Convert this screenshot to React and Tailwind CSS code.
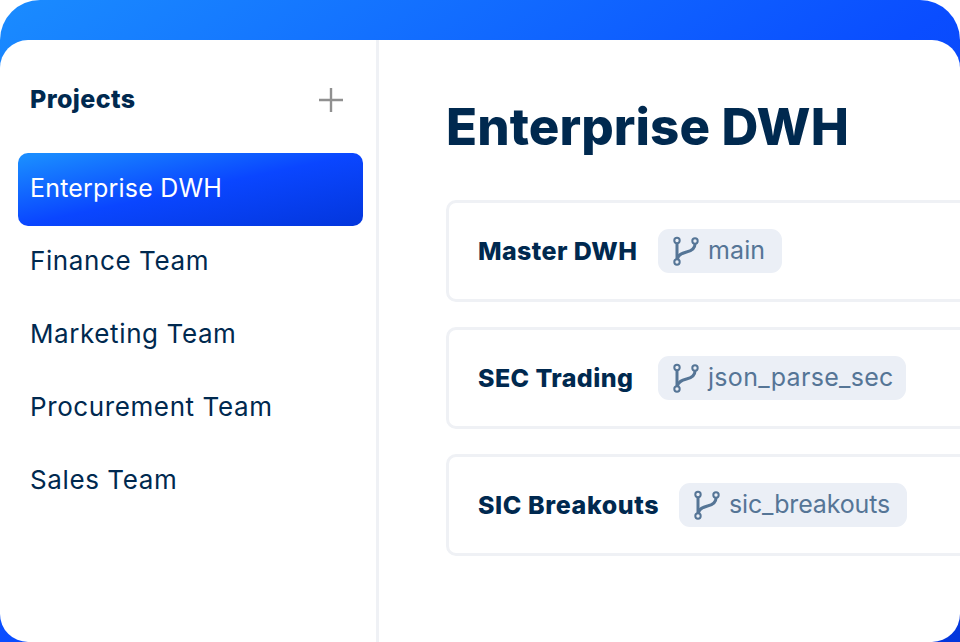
import React from "react";

function Branch() {
  return (
    <svg width="26" height="30" viewBox="0 0 26 30" fill="none" stroke="#557596" className="shrink-0">
      <circle cx="4" cy="4.5" r="2.7" strokeWidth="2" />
      <circle cx="22" cy="5" r="2.7" strokeWidth="2" />
      <circle cx="4" cy="26" r="2.7" strokeWidth="2" />
      <path d="M4 7.5V23" strokeWidth="3" />
      <path d="M22 8C22 13 18 15 13.500 16C9 17.200 5 18.500 4.500 23" strokeWidth="3" />
    </svg>
  );
}

function Row({ title, branch, titleClass, pillClass, branchClass }) {
  return (
    <div className="h-[102px] w-[560px] shrink-0 rounded-[10px] border-[3px] border-[#eff1f5] flex items-center pl-[29px]">
      <span className={`pt-[1px] text-[25px] font-extrabold text-[#00294f] whitespace-nowrap shrink-0 ${titleClass}`}>{title}</span>
      <span className={`h-[44px] rounded-[11px] bg-[#ebeff6] flex items-center pl-[15px] gap-[9px] shrink-0 ${pillClass}`}>
        <Branch />
        <span className={`text-[25px] text-[#557596] whitespace-nowrap ${branchClass}`}>{branch}</span>
      </span>
    </div>
  );
}

const items = ["Finance Team", "Marketing Team", "Procurement Team", "Sales Team"];

export default function App() {
  return (
    <div className="w-[960px] h-[642px] overflow-hidden rounded-t-[40px] pt-[40px] bg-[linear-gradient(to_bottom_right,#1a8cff_0%,#0a4dff_50%,#0336dc_100%)] font-['Inter','Noto_Sans',sans-serif]">
      <div className="h-[602px] bg-white rounded-[28px] flex overflow-hidden">
        <aside className="w-[379px] h-full border-r-[3px] border-[#eff1f5] pl-[18px] pr-[13px] pt-[42px] shrink-0">
          <div className="flex items-center justify-between pl-[12px] pr-[20px] h-[36px]">
            <span className="text-[25px] font-extrabold text-[#00294f] tracking-[0.4px]">Projects</span>
            <svg width="24" height="24" viewBox="0 0 24 24" stroke="#909090" strokeWidth="2.4" fill="none">
              <path d="M12 0V24M0 12H24" />
            </svg>
          </div>
          <div className="mt-[35px] h-[73px] pb-[2px] rounded-[10px] bg-[linear-gradient(to_bottom_right,#1a8cff_4%,#0a46ff_50%,#0336dc_100%)] flex items-center pl-[12px] text-[25px] tracking-[0.2px] text-white">
            Enterprise DWH
          </div>
          {items.map((t) => (
            <div key={t} className="h-[73px] pb-[4px] flex items-center pl-[12px] text-[26px] tracking-[0.6px] text-[#00294f]">
              {t}
            </div>
          ))}
        </aside>
        <main className="flex-1 min-w-0 pl-[67px] pt-[52px]">
          <h1 className="text-[51px] leading-[70px] tracking-[0.1px] font-extrabold text-[#00294f] whitespace-nowrap">Enterprise DWH</h1>
          <div className="mt-[38px] flex flex-col gap-[25px]">
            <Row title="Master DWH" branch="main" titleClass="w-[180px] tracking-[0.4px]" pillClass="w-[124px]" branchClass="tracking-[0.1px]" />
            <Row title="SEC Trading" branch="json_parse_sec" titleClass="w-[180px] tracking-[0.4px]" pillClass="w-[248px]" branchClass="tracking-[0.3px]" />
            <Row title="SIC Breakouts" branch="sic_breakouts" titleClass="w-[201px] tracking-[0.6px]" pillClass="w-[228px]" branchClass="tracking-[-0.15px]" />
          </div>
        </main>
      </div>
    </div>
  );
}
